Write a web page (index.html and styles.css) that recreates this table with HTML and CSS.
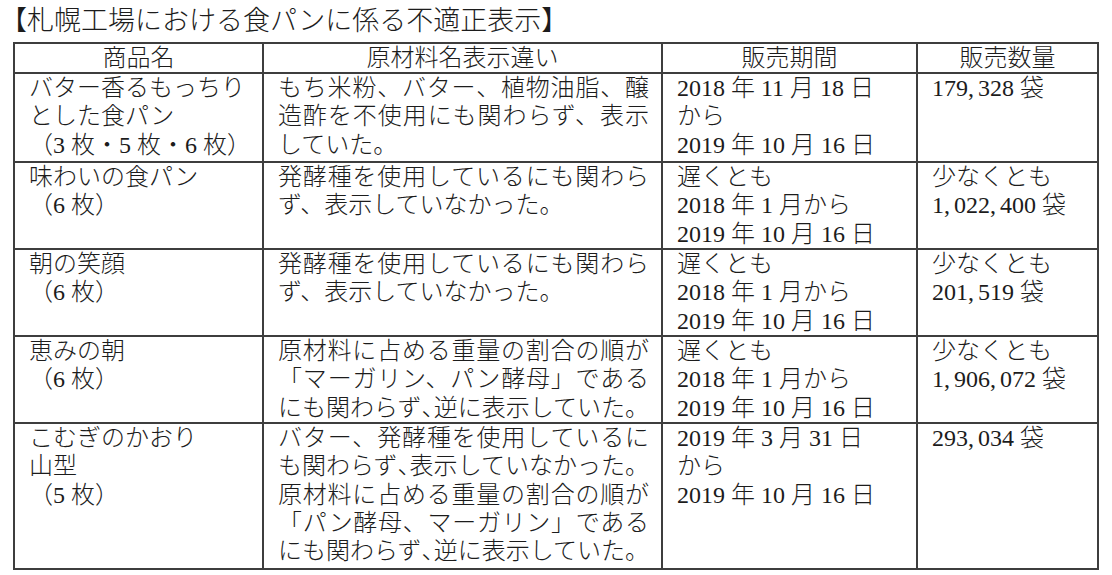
FILE: index.html
```html
<!DOCTYPE html>
<html lang="ja">
<head>
<meta charset="utf-8">
<title>札幌工場における食パンに係る不適正表示</title>
<link rel="stylesheet" href="styles.css">
</head>
<body>
<h1 class="title">【札幌工場における食パンに係る不適正表示】</h1>
<table class="grid">
  <colgroup>
    <col class="c-name">
    <col class="c-desc">
    <col class="c-period">
    <col class="c-qty">
  </colgroup>
  <thead>
    <tr class="head">
      <th>商品名</th>
      <th>原材料名表示違い</th>
      <th>販売期間</th>
      <th>販売数量</th>
    </tr>
  </thead>
  <tbody>
    <tr class="r3a">
      <td><div>バター香るもっちり</div><div>とした食パン</div><div>（3 枚・5 枚・6 枚）</div></td>
      <td class="desc"><div class="j">もち米粉、バター、植物油脂、醸</div><div class="j">造酢を不使用にも関わらず、表示</div><div>していた。</div></td>
      <td><div>2018 年 11 月 18 日</div><div>から</div><div>2019 年 10 月 16 日</div></td>
      <td><div>179<span class="cm">,</span>328 袋</div></td>
    </tr>
    <tr class="r3">
      <td><div>味わいの食パン</div><div>（6 枚）</div></td>
      <td class="desc"><div class="j">発酵種を使用しているにも関わら</div><div>ず、表示していなかった。</div></td>
      <td><div>遅くとも</div><div>2018 年 1 月から</div><div>2019 年 10 月 16 日</div></td>
      <td><div>少なくとも</div><div>1<span class="cm">,</span>022<span class="cm">,</span>400 袋</div></td>
    </tr>
    <tr class="r3">
      <td><div>朝の笑顔</div><div>（6 枚）</div></td>
      <td class="desc"><div class="j">発酵種を使用しているにも関わら</div><div>ず、表示していなかった。</div></td>
      <td><div>遅くとも</div><div>2018 年 1 月から</div><div>2019 年 10 月 16 日</div></td>
      <td><div>少なくとも</div><div>201<span class="cm">,</span>519 袋</div></td>
    </tr>
    <tr class="r3">
      <td><div>恵みの朝</div><div>（6 枚）</div></td>
      <td class="desc"><div class="j">原材料に占める重量の割合の順が</div><div class="j">「マーガリン、パン酵母」である</div><div class="j">にも関わらず<span class="h">、</span>逆に表示していた。</div></td>
      <td><div>遅くとも</div><div>2018 年 1 月から</div><div>2019 年 10 月 16 日</div></td>
      <td><div>少なくとも</div><div>1<span class="cm">,</span>906<span class="cm">,</span>072 袋</div></td>
    </tr>
    <tr class="r5">
      <td><div>こむぎのかおり</div><div>山型</div><div>（5 枚）</div></td>
      <td class="desc"><div class="j">バター、発酵種を使用しているに</div><div class="j">も関わらず<span class="h">、</span>表示していなかった。</div><div class="j">原材料に占める重量の割合の順が</div><div class="j">「パン酵母、マーガリン」である</div><div class="j">にも関わらず<span class="h">、</span>逆に表示していた。</div></td>
      <td><div>2019 年 3 月 31 日</div><div>から</div><div>2019 年 10 月 16 日</div></td>
      <td><div>293<span class="cm">,</span>034 袋</div></td>
    </tr>
  </tbody>
</table>
</body>
</html>
```

FILE: styles.css
```css
html, body {
  margin: 0;
  padding: 0;
  background: #ffffff;
}

body {
  padding-top: 3px;
  color: #1c1c1c;
  font-family: "Liberation Serif", "Noto Sans CJK JP", serif;
  font-weight: 300;
}

.title {
  margin: 0 0 3px 0;
  font-size: 27px;
  line-height: 36px;
  font-weight: 300;
  white-space: nowrap;
}

.grid {
  margin-left: 13px;
  width: 1084px;
  table-layout: fixed;
  border-collapse: collapse;
  border: 2px solid #3e3e3e;
  font-size: 24px;
  line-height: 28.3px;
}

.c-name { width: 249px; }
.c-desc { width: 399px; }
.c-period { width: 255px; }
.c-qty { width: 181px; }

.grid th,
.grid td {
  border: 2px solid #3e3e3e;
  padding: 0 12px 0 14px;
  vertical-align: top;
  text-align: left;
  white-space: nowrap;
}

.grid th {
  font-weight: 300;
  text-align: center;
  line-height: 28px;
  padding: 0;
}

.head { height: 30px; }
.r3a { height: 89px; }
.r3 { height: 87px; }
.r5 { height: 146px; }

.desc { padding-right: 14px; }

.j {
  text-align: justify;
  text-align-last: justify;
}

.h {
  font-feature-settings: "halt" 1;
}

.cm {
  margin-right: 4px;
}
```
